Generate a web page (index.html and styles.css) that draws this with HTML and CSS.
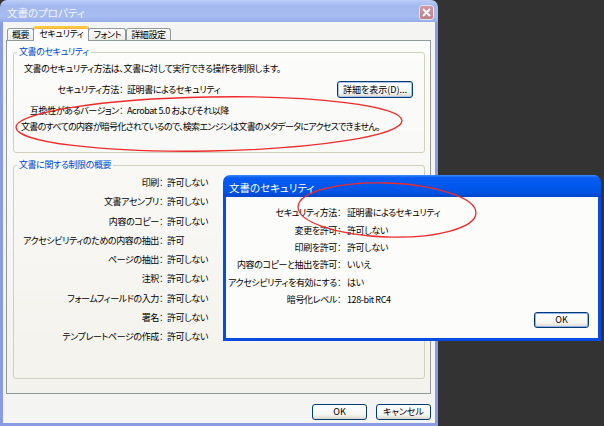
FILE: index.html
```html
<!DOCTYPE html>
<html lang="ja">

<head>
  <meta charset="UTF-8">
  <title>文書のプロパティ</title>
  <link rel="stylesheet" href="styles.css">
</head>

<body>
  <div class="desktop">
    <div class="window main">
      <div class="titlebar">
        <span class="title">文書のプロパティ</span>
        <span class="close">
          <svg width="9" height="9" viewBox="0 0 9 9"><path d="M1 1 L8 8 M8 1 L1 8" stroke="#fff" stroke-width="1.8" /></svg>
        </span>
      </div>
      <div class="client">
        <div class="tabs">
          <span class="tab">概要</span>
          <span class="tab active">セキュリティ</span>
          <span class="tab">フォント</span>
          <span class="tab">詳細設定</span>
        </div>
        <div class="panel">
          <fieldset class="group sec">
            <legend>文書のセキュリティ</legend>
            <div class="group-body">
              <p class="note">文書のセキュリティ方法は、文書に対して実行できる操作を制限します。</p>
              <div class="field method">
                <span class="label">セキュリティ方法：</span>
                <span class="value">証明書によるセキュリティ</span>
                <button class="btn details">詳細を表示(D)...</button>
              </div>
              <div class="field compat">
                <span class="label">互換性があるバージョン：</span>
                <span class="value">Acrobat 5.0 およびそれ以降</span>
              </div>
              <p class="note wide">文書のすべての内容が暗号化されているので、検索エンジンは文書のメタデータにアクセスできません。</p>
            </div>
          </fieldset>
          <fieldset class="group limits">
            <legend>文書に関する制限の概要</legend>
            <div class="group-body">
              <div class="field"><span class="label">印刷：</span><span class="value">許可しない</span></div>
              <div class="field"><span class="label">文書アセンブリ：</span><span class="value">許可しない</span></div>
              <div class="field"><span class="label">内容のコピー：</span><span class="value">許可しない</span></div>
              <div class="field"><span class="label">アクセシビリティのための内容の抽出：</span><span class="value">許可</span></div>
              <div class="field"><span class="label">ページの抽出：</span><span class="value">許可しない</span></div>
              <div class="field"><span class="label">注釈：</span><span class="value">許可しない</span></div>
              <div class="field"><span class="label">フォームフィールドの入力：</span><span class="value">許可しない</span></div>
              <div class="field"><span class="label">署名：</span><span class="value">許可しない</span></div>
              <div class="field"><span class="label">テンプレートページの作成：</span><span class="value">許可しない</span></div>
            </div>
          </fieldset>
        </div>
        <div class="actions">
          <button class="btn">OK</button>
          <button class="btn">キャンセル</button>
        </div>
      </div>
    </div>

    <div class="window sub">
      <div class="titlebar">
        <span class="title">文書のセキュリティ</span>
      </div>
      <div class="client">
        <div class="field"><span class="label">セキュリティ方法：</span><span class="value">証明書によるセキュリティ</span></div>
        <div class="field"><span class="label">変更を許可：</span><span class="value">許可しない</span></div>
        <div class="field"><span class="label">印刷を許可：</span><span class="value">許可しない</span></div>
        <div class="field"><span class="label">内容のコピーと抽出を許可：</span><span class="value">いいえ</span></div>
        <div class="field"><span class="label">アクセシビリティを有効にする：</span><span class="value">はい</span></div>
        <div class="field"><span class="label">暗号化レベル：</span><span class="value">128-bit RC4</span></div>
        <button class="btn default">OK</button>
      </div>
    </div>

    <svg class="marks" width="604" height="426" viewBox="0 0 604 426">
      <ellipse cx="209" cy="124" rx="193" ry="27" transform="rotate(-1 209 124)" />
      <ellipse cx="387" cy="210" rx="89" ry="27" transform="rotate(2 387 210)" />
    </svg>
  </div>
</body>

</html>
```

FILE: styles.css
```css
* {
  box-sizing: border-box;
}

body {
  margin: 0;
  background: #333;
  font-family: "Noto Sans CJK JP", sans-serif;
  font-size: 9px;
  letter-spacing: -0.4px;
  font-feature-settings: "palt";
  color: #000;
}

.desktop {
  position: relative;
  width: 604px;
  height: 426px;
  overflow: hidden;
}

.window {
  display: flex;
  flex-direction: column;
}

.titlebar {
  height: 22px;
  display: flex;
  align-items: center;
  padding: 3px 4px 0 7px;
  border-radius: 7px 7px 0 0;
  color: #fff;
  font-size: 10.5px;
  letter-spacing: 0;
}

.client {
  flex: 1;
  display: flex;
  flex-direction: column;
  border: 3px solid;
  border-top: 0;
}

/* main window (inactive) */
.window.main {
  width: 438px;
  height: 426px;
}

.main .titlebar {
  background: linear-gradient(#bccdf5, #a3b9ef 25%, #a7bcf0 75%, #95ade9);
  color: #f2f5ff;
}

.close {
  margin-left: auto;
  width: 15px;
  height: 15px;
  display: flex;
  align-items: center;
  justify-content: center;
  border: 1px solid #e8e0ea;
  border-radius: 3px;
  background: linear-gradient(#d19aa4, #bd7f8a);
}

.main .client {
  border-color: #8a9be4;
  background: #f4f4f2;
  padding: 4px 4px 3px 3px;
}

.tabs {
  display: flex;
  align-items: flex-end;
  height: 14px;
  padding-left: 1px;
}

.tab {
  height: 12px;
  padding: 0 4px;
  line-height: 11px;
  border: 1px solid #919b9c;
  border-bottom: 0;
  border-radius: 3px 3px 0 0;
  background: linear-gradient(#fff, #ecebe6);
}

.tab.active {
  height: 15px;
  margin: 0 -1px -1px;
  padding: 0 5px;
  line-height: 12px;
  border-top: 2px solid #ffc83c;
  background: #fcfcfe;
  box-shadow: inset 0 1px 0 #f7b73e;
  z-index: 1;
}

.panel {
  height: 354px;
  padding: 5px 5px 0 6px;
  border: 1px solid #919b9c;
  background: linear-gradient(#fcfcfb, #f3f2ec);
}

.group {
  margin: 0;
  padding: 0;
  min-width: 0;
  border: 1px solid #d0d0bf;
  border-radius: 3px;
}

.group legend {
  margin-left: 3px;
  padding: 0 2px;
  line-height: 12px;
  color: #0046d5;
}

.group-body {
  padding: 4px 10px 0;
}

.note {
  margin: 0;
  line-height: 14px;
}

.note.wide {
  margin: 2px 0 0 -3px;
  letter-spacing: -0.7px;
}

.field {
  display: flex;
  align-items: center;
}

.label {
  flex: none;
  display: flex;
  justify-content: flex-end;
  white-space: nowrap;
}

.value {
  margin-left: 4px;
  white-space: nowrap;
}

.sec {
  height: 107px;
}

.sec .label {
  width: 99px;
}

.sec .method {
  margin-top: 5px;
  height: 17px;
}

.sec .compat {
  margin-top: 6px;
  line-height: 14px;
}

.limits {
  height: 220px;
  margin-top: 6px;
}

.limits .group-body {
  padding: 2px 10px 0 4px;
}

.limits .field {
  height: 19.25px;
}

.limits .label {
  width: 145px;
}

.btn {
  height: 16px;
  width: 55px;
  padding: 0;
  font: inherit;
  line-height: 14px;
  color: #000;
  border: 1px solid #003c74;
  border-radius: 3px;
  background: linear-gradient(#fff, #f5f5f1 70%, #dcd8cc);
}

.btn.details {
  width: 76px;
  height: 17px;
  margin-left: auto;
  margin-right: 1px;
  box-shadow: inset 0 0 0 1px #a9c3f0;
}

.actions {
  display: flex;
  justify-content: flex-end;
  gap: 9px;
  margin-top: 10px;
}

/* security details dialog (active) */
.window.sub {
  position: absolute;
  left: 223px;
  top: 175px;
  width: 378px;
  height: 166px;
}

.sub .titlebar {
  padding-left: 6px;
  background: linear-gradient(#3d8cff, #0a5cf0 12%, #0058ee 45%, #0053e2 80%, #0044c9);
}

.sub .client {
  border-color: #0a4ce0;
  background: #fcfcfb;
  padding: 7px 9px 9px 0;
}

.sub .field {
  height: 17.4px;
}

.sub .label {
  width: 115px;
}

.sub .value {
  margin-left: 6px;
}

.btn.default {
  align-self: flex-end;
  margin-top: 4px;
  box-shadow: inset 0 0 0 1px #8fb1ee;
}

.marks {
  position: absolute;
  left: 0;
  top: 0;
  pointer-events: none;
}

.marks ellipse {
  fill: none;
  stroke: #ee2b2b;
  stroke-width: 1.3;
}
```
